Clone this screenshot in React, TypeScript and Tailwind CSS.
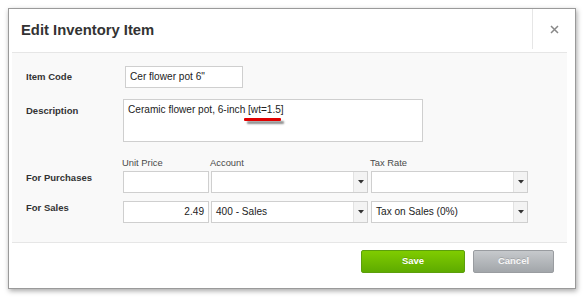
import React from "react";

const font = { fontFamily: '"Liberation Sans", Arial, sans-serif' };

function Arrow() {
  return (
    <div className="flex h-full w-[14px] shrink-0 items-center justify-center border-l border-[#e2e2e2] bg-[#f3f3f3]">
      <svg width="6" height="4" viewBox="0 0 6 4">
        <path d="M0 0 L6 0 L3 3.5 Z" fill="#333" />
      </svg>
    </div>
  );
}

function Select({ value, w }: { value?: string; w: string }) {
  return (
    <div className={`flex h-[22px] ${w} items-stretch border border-[#cfcfcf] bg-white`}>
      <div className="flex flex-1 items-center pl-[4px] text-[10.1px] text-[#222]">{value}</div>
      <Arrow />
    </div>
  );
}

export default function App() {
  return (
    <div className="h-[297px] w-[584px] bg-white pl-[8px] pt-[8px]" style={font}>
      <div className="flex h-[281px] w-[568px] flex-col border border-[#9a9a9a] bg-white shadow-[1px_2px_5px_rgba(0,0,0,0.35)]">
        {/* header */}
        <div className="flex h-[43px] items-start">
          <div className="flex h-[43px] flex-1 items-center pl-[12px] text-[14.8px] font-bold text-[#333]">
            Edit Inventory Item
          </div>
          <div className="flex h-[40px] w-[43px] items-center justify-center border-l border-[#e6e6e6]">
            <svg width="9" height="9" viewBox="0 0 9 9">
              <path d="M1 1 L8 8 M8 1 L1 8" stroke="#888" strokeWidth="1.5" />
            </svg>
          </div>
        </div>
        {/* body */}
        <div className="ml-[3px] mr-[8px] border-b border-t border-[#e6e6e6] bg-[#f9f9f9] pb-[19px] pl-[14px] pt-[13px]">
          <div className="flex items-center">
            <div className="w-[99px] text-[9.5px] font-bold text-[#333]">Item Code</div>
            <div className="flex h-[22px] w-[118px] items-center border border-[#cfcfcf] bg-white pl-[4px] text-[10.1px] text-[#222]">
              Cer flower pot 6"
            </div>
          </div>
          <div className="mt-[11px] flex items-start">
            <div className="w-[97px] pt-[5px] text-[9.5px] font-bold leading-[13px] text-[#333]">Description</div>
            <div className="relative h-[43px] w-[300px] border border-[#cfcfcf] bg-white pl-[4px] pt-[3px] text-[10.1px] leading-[14px] text-[#222]">
              Ceramic flower pot, 6-inch [wt=1.5]
              <div className="absolute left-[120px] top-[18px] h-[3px] w-[37px] rounded-[1px] bg-[#e00000] shadow-[3px_3px_2px_rgba(0,0,0,0.45)]" />
            </div>
          </div>
          <div className="mt-[14px] flex h-[14px] items-center text-[9.4px] text-[#4a4a4a]">
            <div className="w-[96px]" />
            <div className="w-[88px]">Unit Price</div>
            <div className="w-[160px]">Account</div>
            <div>Tax Rate</div>
          </div>
          <div className="mt-[1px] flex items-start">
            <div className="w-[97px] text-[9.5px] font-bold leading-[13px] text-[#333]">For Purchases</div>
            <div className="h-[22px] w-[86px] border border-[#cfcfcf] bg-white" />
            <div className="ml-[2px]">
              <Select w="w-[157px]" />
            </div>
            <div className="ml-[3px]">
              <Select w="w-[157px]" />
            </div>
          </div>
          <div className="mt-[8px] flex items-start">
            <div className="w-[97px] text-[9.5px] font-bold leading-[13px] text-[#333]">For Sales</div>
            <div className="flex h-[22px] w-[86px] items-center justify-end border border-[#cfcfcf] bg-white pr-[4px] text-[10.1px] text-[#222]">
              2.49
            </div>
            <div className="ml-[2px]">
              <Select w="w-[157px]" value="400 - Sales" />
            </div>
            <div className="ml-[3px]">
              <Select w="w-[157px]" value="Tax on Sales (0%)" />
            </div>
          </div>
        </div>
        {/* footer */}
        <div className="mt-[7px] flex justify-end gap-[8px] pr-[21px]">
          <button className="flex h-[23px] w-[104px] items-center justify-center rounded-[2px] border border-[#5c9f0c] bg-gradient-to-b from-[#80cc00] to-[#5eab00] text-[9.5px] font-bold text-white [text-shadow:0_-1px_0_rgba(0,0,0,0.15)]">
            Save
          </button>
          <button className="flex h-[23px] w-[81px] items-center justify-center rounded-[2px] border border-[#999ca0] bg-gradient-to-b from-[#c6c9cc] to-[#a2a6aa] text-[9.5px] font-bold text-[#f6f6f6] [text-shadow:0_-1px_0_rgba(0,0,0,0.15)]">
            Cancel
          </button>
        </div>
      </div>
    </div>
  );
}
